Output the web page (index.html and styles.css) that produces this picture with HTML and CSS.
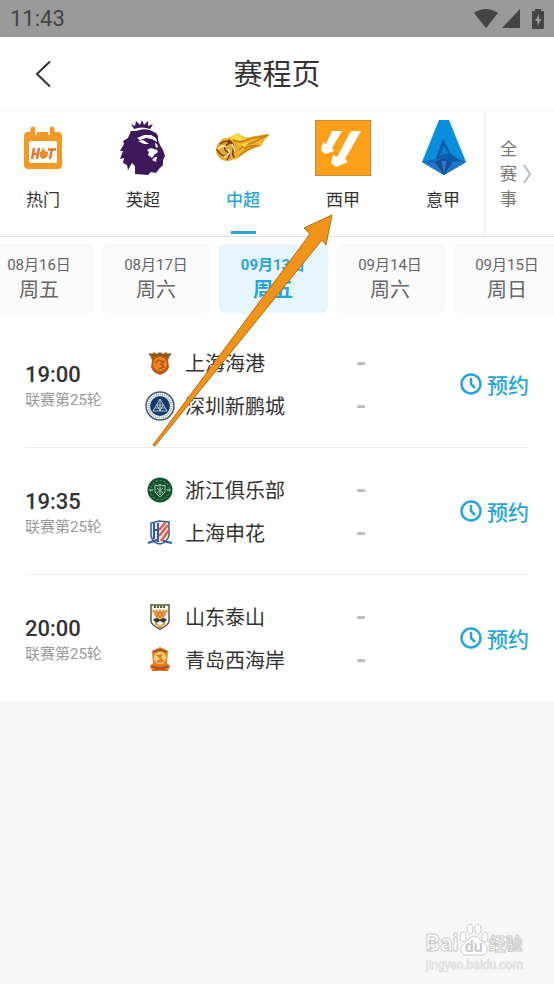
FILE: index.html
```html
<!DOCTYPE html>
<html lang="zh-CN">
<head>
  <meta charset="UTF-8">
  <meta name="viewport" content="width=device-width, initial-scale=1">
  <title>赛程页</title>
  <link rel="stylesheet" href="styles.css">
</head>

<body>

  <!-- Status bar -->
  <div class="status-bar">
    <span class="clock">11:43</span>
    <div class="status-icons">
      <svg width="24" height="19" viewBox="0 0 24 19"><path d="M0 4Q12-4 24 4L12 19Z" fill="#444"/></svg>
      <svg width="18" height="19" viewBox="0 0 18 19"><path d="M18 0V19H0Z" fill="#444"/></svg>
      <svg class="battery" width="12" height="20" viewBox="0 0 12 20"><path d="M3 2V0H9V2H11Q12 2 12 3V19Q12 20 11 20H1Q0 20 0 19V3Q0 2 1 2Z" fill="#444"/><path d="M7 5L3 12H5.500V17L9.500 10H7Z" fill="#999"/></svg>
    </div>
  </div>

  <header class="header">
    <button class="back-btn" aria-label="返回">
      <svg width="18" height="28" viewBox="0 0 18 28"><path d="M16 1.500L3 14L16 26.500" fill="none" stroke="#333" stroke-width="2"/></svg>
    </button>
    <h1>赛程页</h1>
  </header>

  <!-- Leagues -->
  <div class="leagues">
    <nav class="league-list">
      <button class="league">
        <svg width="56" height="56" viewBox="0 0 56 56">
          <path d="M18 13V9M37 13V9" stroke="#f39a26" stroke-width="5" stroke-linecap="round"/>
          <rect x="9" y="12" width="38" height="37" rx="4" fill="#f39a26"/>
          <path d="M21 10V15M34 10V15" stroke="#fff" stroke-width="1.500"/>
          <rect x="14" y="21" width="28" height="22" rx="2" fill="#fff"/>
          <g fill="none" stroke="#e07a2a" stroke-width="2.500"><path d="M17 39L19 28M22 39L24 28M18 34H23M33 29.500H41M37 29L35 39"/></g>
          <path d="M28 27L30 31L33 32Q33 39 28 39Q24 38 25 32L27 31Z" fill="#f08a22"/>
        </svg>
        <span>热门</span>
      </button>
      <button class="league">
        <svg width="56" height="56" viewBox="0 0 56 56">
          <path d="M19 9L16 4L20 6L21 1L25 5L27 0L29 5L33 1L33 6L38 4L35 9Q27 6 19 9Z" fill="#3d195b"/>
          <path d="M16 11L21 11Q28 8 35 10L41 13L43 16L43 20L45 25L48 30L50 36L48 40L48 45L44 49L41 53L36 52L33 55L20 54V46L17 43L13 50L12 45L8 43L9 38L5 39L8 31L5 31L9 24L8 21L13 18Z" fill="#3d195b"/>
          <path d="M22 18L29 15L36 15L41 18L42 22L37 19L31 18L25 20ZM23 21L28 20L34 24L29 24ZM40 23L42 24L43 27L41 28ZM32 30L36 28L42 30L43 32L40 34L37 38L33 35L34 32ZM37 40L40 37L42 37L41 42Z" fill="#fff"/>
        </svg>
        <span>英超</span>
      </button>
      <button class="league active">
        <svg width="56" height="56" viewBox="0 0 56 56">
          <path d="M6 19Q16 18 23 13Q31 20 39 16L55 14Q49 20 46 26Q34 29 22 39L14 40Z" fill="#eeb72b"/>
          <path d="M18 20Q26 24 34 19Q43 17 53 15Q44 19 38 23Q31 23 24 30M24 36Q32 28 42 26Q36 24 29 29" fill="none" stroke="#c97a17" stroke-width="1.500"/>
          <path d="M14 17L23 13Q25 17 31 18L24 21ZM27 24L35 22L29 27Z" fill="#f8dc45"/>
          <circle cx="12" cy="30" r="11" fill="#e8a82d"/>
          <g fill="none" stroke="#7d3c1c" stroke-width="1.500"><path d="M5 24Q11 19 15 23Q7 26 11 31Q17 34 12 40M13 20Q20 23 18 31Q17 37 20 37M2 29Q6 38 13 35"/></g>
          <path d="M3 29Q8 24 11 27M9 37Q17 34 13 29M17 24L20 31" fill="none" stroke="#fff4c5" stroke-width="1.500"/>
        </svg>
        <span>中超</span>
      </button>
      <button class="league">
        <svg width="56" height="56" viewBox="0 0 56 56">
          <rect x="0.500" y="0.500" width="55" height="55" fill="#fca01b" stroke="#c98a35"/>
          <path d="M17 11H27L17 28L19 31L10 34L6 30L8 22L11 24ZM36 11H46L30 39L33 42L21 47L16 43L18 35L22 37Z" fill="#fff"/>
        </svg>
        <span>西甲</span>
      </button>
      <button class="league">
        <svg width="56" height="56" viewBox="0 0 56 56">
          <path d="M24 0H34L51 42L29 55L7 42Z" fill="#078fdc"/>
          <path d="M28 19L20 39L7 42L29 55L51 42L36 36Z" fill="#1269ba"/>
          <path d="M28 19L21 39L29 36L36 42L44 40L36 34Z" fill="#0d59a5"/>
          <path d="M29 25L34 34H28L24 37Z" fill="#0783ce"/>
          <path d="M7 42L22 43L29 55ZM51 42L36 42L29 55Z" fill="#1d78cb"/>
          <path d="M20 42L29 38L37 43L29 55Z" fill="#154e98"/>
          <path d="M26 41H32L29 53Z" fill="#3378bf"/>
        </svg>
        <span>意甲</span>
      </button>
    </nav>
    <button class="all-btn">
      <span class="all-text">全<br>赛<br>事</span>
      <svg width="8" height="20" viewBox="0 0 8 20"><path d="M1 1L7 10L1 19" fill="none" stroke="#bbb" stroke-width="2"/></svg>
    </button>
  </div>

  <!-- Dates -->
  <div class="dates">
    <button class="date"><span>08月16日</span><span class="day">周五</span></button>
    <button class="date"><span>08月17日</span><span class="day">周六</span></button>
    <button class="date active"><span>09月13日</span><span class="day">周五</span></button>
    <button class="date"><span>09月14日</span><span class="day">周六</span></button>
    <button class="date"><span>09月15日</span><span class="day">周日</span></button>
  </div>

  <!-- Matches -->
  <main class="matches">
    <section class="match">
      <div class="match-time">
        <strong>19:00</strong>
        <span>联赛第25轮</span>
      </div>
      <div class="teams">
        <div class="team">
          <svg width="30" height="30" viewBox="0 0 30 30">
            <path d="M5 8L9 4L12 6L15 4L18 6L21 4L25 8L23 12L24 19Q22 25 15 27Q8 25 6 19L7 12Z" fill="#b65b16"/>
            <path d="M4 6L10 8L15 6L20 8L26 6" fill="none" stroke="#7b5a22" stroke-width="2"/>
            <circle cx="15" cy="16" r="7" fill="#ee861b"/>
            <path d="M10 15L14 12L19 14L16 16L19 19L14 21" fill="none" stroke="#b5501a" stroke-width="1.500"/>
          </svg>
          <span class="name">上海海港</span>
          <span class="score">-</span>
        </div>
        <div class="team">
          <svg width="30" height="30" viewBox="0 0 30 30">
            <circle cx="15" cy="15" r="14" fill="#fff" stroke="#435b79" stroke-width="1.500"/>
            <circle cx="15" cy="15" r="11.500" fill="none" stroke="#94a0b0" stroke-width="2" stroke-dasharray="1 1"/>
            <circle cx="15" cy="15" r="10" fill="#173c69"/>
            <path d="M15 8L22 20H8ZM11.500 14H18.500M10 17H20M15 9V20M12 14L15 20L18 14" fill="none" stroke="#b7c5d7"/>
          </svg>
          <span class="name">深圳新鹏城</span>
          <span class="score">-</span>
        </div>
      </div>
      <button class="book-btn">
        <svg width="22" height="22" viewBox="0 0 22 22"><circle cx="11" cy="11" r="9.500" fill="none" stroke="#27a5da" stroke-width="2.500"/><path d="M11 5V11L15 15" fill="none" stroke="#27a5da" stroke-width="2.500"/></svg>
        预约
      </button>
    </section>

    <section class="match">
      <div class="match-time">
        <strong>19:35</strong>
        <span>联赛第25轮</span>
      </div>
      <div class="teams">
        <div class="team">
          <svg width="30" height="30" viewBox="0 0 30 30">
            <circle cx="15" cy="15" r="12.500" fill="#14532f"/>
            <circle cx="15" cy="15" r="9.500" fill="none" stroke="#6b9a7a" stroke-dasharray="2 2"/>
            <path d="M10 10L13 11L15 9L17 11L20 10V17L15 22L10 17ZM12 13L18 18M18 13L12 18M15 10V20" fill="none" stroke="#a8c7af"/>
            <path d="M4 15H8M22 15H26" fill="none" stroke="#8db699" stroke-width="1.500"/>
          </svg>
          <span class="name">浙江俱乐部</span>
          <span class="score">-</span>
        </div>
        <div class="team">
          <svg width="30" height="30" viewBox="0 0 30 30">
            <path d="M6 5L14 3L24 4V17Q23 22 27 25L15 27L3 25Q7 22 6 17Z" fill="#e8edf7"/>
            <path d="M6 5V18Q8 25 15 26Q23 24 24 17V4L14 3Z" fill="none" stroke="#315ca0" stroke-width="1.500"/>
            <path d="M14 12L21 4M14 18L23 7M16 23L24 12" stroke="#e0603f" stroke-width="2.500"/>
            <path d="M9 5V21M13 5V24M8 12H14M3 25L12 22M18 23L27 25" stroke="#315ca0" stroke-width="2"/>
          </svg>
          <span class="name">上海申花</span>
          <span class="score">-</span>
        </div>
      </div>
      <button class="book-btn">
        <svg width="22" height="22" viewBox="0 0 22 22"><circle cx="11" cy="11" r="9.500" fill="none" stroke="#27a5da" stroke-width="2.500"/><path d="M11 5V11L15 15" fill="none" stroke="#27a5da" stroke-width="2.500"/></svg>
        预约
      </button>
    </section>

    <section class="match">
      <div class="match-time">
        <strong>20:00</strong>
        <span>联赛第25轮</span>
      </div>
      <div class="teams">
        <div class="team">
          <svg width="30" height="30" viewBox="0 0 30 30">
            <path d="M6 3H24V20Q22 24 15 27Q8 24 6 20Z" fill="#fff" stroke="#5d553b" stroke-width="1.500"/>
            <path d="M9 5H21" stroke="#5d553b" stroke-width="2" stroke-dasharray="2 1"/>
            <path d="M8 8L12 15L15 9L18 15L22 8M11 8L15 16L19 8" fill="none" stroke="#ef7e20" stroke-width="2"/>
            <path d="M8 17L13 16L15 18L17 16L22 17L19 21L15 19L11 21Z" fill="#333"/>
            <path d="M10 21L15 25L20 21" fill="none" stroke="#d99d3b" stroke-width="2"/>
          </svg>
          <span class="name">山东泰山</span>
          <span class="score">-</span>
        </div>
        <div class="team">
          <svg width="30" height="30" viewBox="0 0 30 30">
            <path d="M7 6L15 2L23 6L22 18L25 21L23 26H7L5 21L8 18Z" fill="#df8323"/>
            <path d="M8 7Q15 3 22 7" fill="none" stroke="#a95919" stroke-width="2"/>
            <circle cx="15" cy="13" r="6" fill="#ffd784"/>
            <path d="M11 10L18 9L16 13L20 16L15 18L10 17L15 14Z" fill="#e77b16"/>
            <path d="M6 21Q15 25 24 21M9 25Q15 22 21 25" fill="none" stroke="#b84f18" stroke-width="2"/>
          </svg>
          <span class="name">青岛西海岸</span>
          <span class="score">-</span>
        </div>
      </div>
      <button class="book-btn">
        <svg width="22" height="22" viewBox="0 0 22 22"><circle cx="11" cy="11" r="9.500" fill="none" stroke="#27a5da" stroke-width="2.500"/><path d="M11 5V11L15 15" fill="none" stroke="#27a5da" stroke-width="2.500"/></svg>
        预约
      </button>
    </section>
  </main>

  <!-- Arrow pointing at the league tab -->
  <svg class="arrow" width="184" height="236" viewBox="0 0 184 236"><path d="M1 233L158 22L152 16L180 3L174 33L170 28L3 234Z" fill="#ef9418" stroke="#b56a17" stroke-linejoin="round"/></svg>

  <!-- Watermark -->
  <div class="watermark">
    <div class="brand">
      <span>Bai</span>
      <span class="paw">
        <svg width="30" height="34" viewBox="0 0 30 34"><g fill="#fff" stroke="#ccc"><ellipse cx="4" cy="14" rx="3" ry="5"/><ellipse cx="11" cy="6" rx="3" ry="5"/><ellipse cx="19" cy="6" rx="3" ry="5"/><ellipse cx="26" cy="14" rx="3" ry="5"/><path d="M15 13Q19 13 22 18Q29 23 28 28Q26 33 21 32H9Q4 33 2 28Q1 23 8 18Q11 13 15 13Z"/></g></svg>
        <span class="du">du</span>
      </span>
      <span class="cn">经验</span>
    </div>
    <div class="site">jingyan.baidu.com</div>
  </div>

</body>
</html>
```
FILE: styles.css
```css
body {
  font-family: Roboto, "Noto Sans CJK SC", sans-serif;
  background-color: #f7f7f7;
  color: #333;
  margin: 0;
  min-height: 100vh;
  position: relative;
  overflow-x: hidden;
}

button {
  font-family: inherit;
  color: inherit;
  background: none;
  border: none;
  padding: 0;
  cursor: pointer;
}

svg {
  display: block;
  flex-shrink: 0;
}

.status-bar {
  display: flex;
  justify-content: space-between;
  align-items: center;
  height: 37px;
  padding: 0 10px;
  background-color: #999;
  color: #444;
}

.clock {
  font-size: 22px;
}

.status-icons {
  display: flex;
  align-items: center;
  gap: 4px;
}

.battery {
  margin-left: 8px;
}

.header {
  display: flex;
  align-items: center;
  height: 74px;
  padding: 0 34px;
  background-color: #fff;
  border-bottom: 1px solid #f5f5f5;
}

.back-btn {
  width: 18px;
}

h1 {
  flex: 1;
  margin: 0 18px 0 0;
  font-size: 29px;
  font-weight: 400;
  line-height: 40px;
  padding-top: 2px;
  text-align: center;
}

/* Leagues */
.leagues {
  display: flex;
  height: 124px;
  background-color: #fff;
  border-bottom: 1px solid #ddd;
}

.league-list {
  flex: 1;
  display: flex;
  justify-content: center;
  padding-left: 2px;
  overflow: hidden;
}

.league {
  flex: 0 0 100px;
  display: flex;
  flex-direction: column;
  align-items: center;
  gap: 12px;
  padding-top: 8px;
  font-size: 17px;
  line-height: 24px;
}

.league.active {
  color: #27a5da;
  font-weight: 500;
}

.league.active::after {
  content: "";
  width: 25px;
  height: 3px;
  margin-top: 7px;
  background-color: #27a5da;
}

.all-btn {
  display: flex;
  align-items: center;
  gap: 6px;
  width: 70px;
  padding-left: 14px;
  border-left: 2px solid #f2f2f2;
  color: #777;
}

.all-text {
  font-size: 17px;
  line-height: 25px;
}

/* Dates */
.dates {
  display: flex;
  justify-content: center;
  gap: 8px;
  padding: 7px 8px 8px 0;
  background-color: #fff;
  overflow: hidden;
}

.date {
  flex: 0 0 109px;
  display: flex;
  flex-direction: column;
  justify-content: center;
  height: 69px;
  background-color: #fafafa;
  border-radius: 6px;
  color: #666;
  font-size: 15px;
  line-height: 22px;
}

.day {
  font-size: 20px;
  line-height: 28px;
}

.date.active {
  background-color: #e6f5fe;
  color: #27a5da;
  font-weight: 700;
}

/* Matches */
.matches {
  padding: 0 25px;
  background-color: #fff;
}

.match {
  display: flex;
  align-items: center;
  height: 126px;
  border-bottom: 1px solid #eee;
}

.match:last-child {
  border-bottom: none;
}

.match-time {
  display: flex;
  flex-direction: column;
  width: 120px;
  padding-top: 6px;
}

.match-time strong {
  font-size: 22px;
  font-weight: 500;
  line-height: 26px;
}

.match-time span {
  color: #999;
  font-size: 15px;
  line-height: 24px;
}

.teams {
  flex: 1;
}

.team {
  display: flex;
  align-items: center;
  gap: 10px;
  height: 43px;
}

.name {
  width: 161px;
  font-size: 20px;
}

.score {
  color: #bbb;
  font-size: 30px;
  font-weight: 500;
}

.book-btn {
  display: flex;
  align-items: center;
  gap: 5px;
  color: #27a5da;
  font-size: 21px;
  font-weight: 500;
}

.arrow {
  position: absolute;
  left: 152px;
  top: 212px;
  pointer-events: none;
}

/* Watermark */
.watermark {
  position: absolute;
  right: 31px;
  bottom: 11px;
  color: #fff;
}

.brand {
  display: flex;
  align-items: flex-end;
  font-size: 23px;
  font-weight: 700;
  line-height: 26px;
  -webkit-text-stroke: 1px #ccc;
}

.paw {
  position: relative;
}

.du {
  position: absolute;
  left: 0;
  right: 0;
  bottom: 0;
  color: #ccc;
  font-size: 16px;
  line-height: 20px;
  text-align: center;
  -webkit-text-stroke: 0;
}

.cn {
  font-size: 17px;
}

.site {
  font-size: 12px;
  line-height: 16px;
  -webkit-text-stroke: 1px #e2e2e2;
}
```
